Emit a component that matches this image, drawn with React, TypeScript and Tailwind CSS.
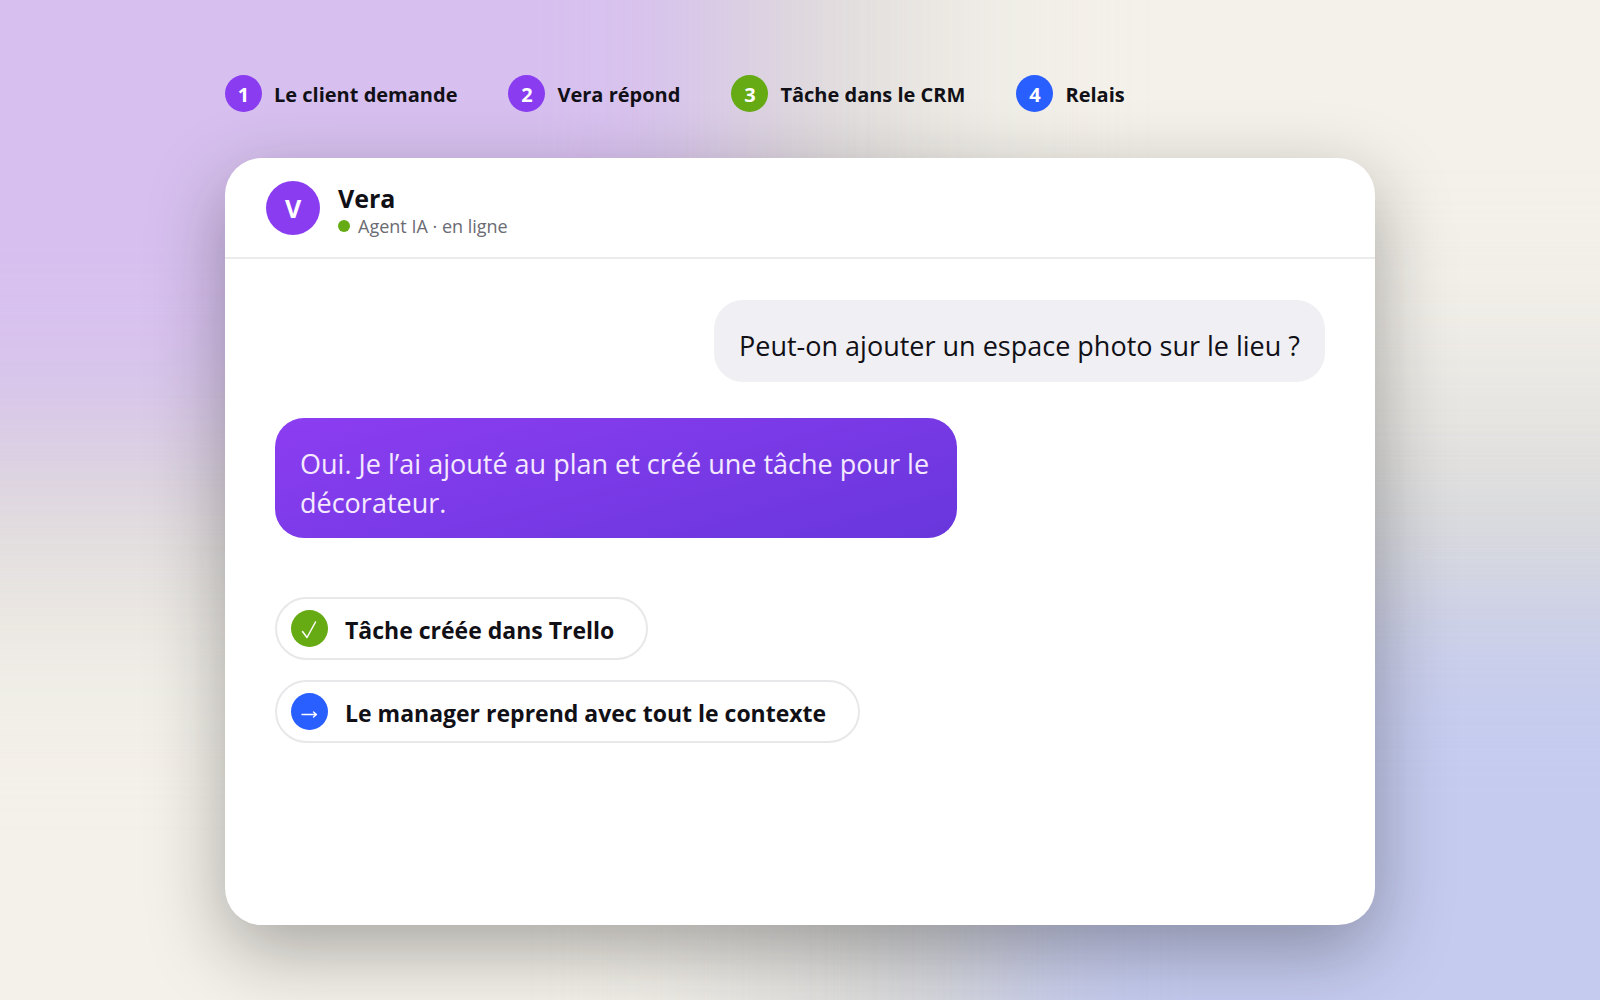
type Step = { n: string; label: string; color: string };

const steps: Step[] = [
  { n: "1", label: "Le client demande", color: "bg-[#8a3df0]" },
  { n: "2", label: "Vera répond", color: "bg-[#8a3df0]" },
  { n: "3", label: "Tâche dans le CRM", color: "bg-[#66aa14]" },
  { n: "4", label: "Relais", color: "bg-[#2a5fff]" },
];

const App = () => {
  return (
    <main className="relative isolate min-h-screen overflow-hidden bg-[#f4f1ea] px-8 py-[75px] flex flex-col items-center font-['Open_Sans','Noto_Sans',sans-serif] text-[#111016]">
      {/* Background glows, each one a coloured core over a wider grey halo */}
      <div className="absolute -z-10 -top-80 -left-80 w-[1230px] h-[910px] bg-[#dddad9] blur-[100px]" />
      <div className="absolute -z-10 -bottom-80 -right-80 w-[1150px] h-[910px] bg-[#dadada] blur-[100px]" />
      <div className="absolute -z-10 -top-80 -left-80 w-[1050px] h-[760px] bg-[#d7c0ef] blur-[80px]" />
      <div className="absolute -z-10 -bottom-80 -right-80 w-[920px] h-[720px] bg-[#c5cbef] blur-[80px]" />

      <div className="w-full max-w-[1150px] grow flex flex-col">
        <ol className="flex flex-wrap gap-x-[51px] gap-y-4 mb-[46px]">
          {steps.map((step) => (
            <li key={step.n} className="flex items-center gap-3">
              <span
                className={`w-[37px] h-[37px] rounded-full flex items-center justify-center pt-0.5 text-[20px] leading-none font-bold text-white ${step.color}`}
              >
                {step.n}
              </span>
              <span className="pt-0.5 text-[20px] leading-7 font-bold">{step.label}</span>
            </li>
          ))}
        </ol>

        {/* Chat window */}
        <section className="grow bg-white rounded-[37px] shadow-[0_25px_75px_rgba(20,20,20,0.34)]">
          <header className="flex items-center gap-[18px] px-[41px] h-[101px] border-b-2 border-[#ebebec]">
            <div className="w-[54px] h-[54px] rounded-full bg-[#8a3df0] flex items-center justify-center pt-0.5 text-[25px] leading-none font-bold text-white">
              V
            </div>
            <div className="pt-1">
              <h1 className="text-[25px] leading-8 font-bold">Vera</h1>
              <p className="flex items-center gap-2 text-[18px] leading-6 text-[#6b6b73]">
                <span className="w-3 h-3 rounded-full bg-[#66aa14]" />
                Agent IA · en ligne
              </p>
            </div>
          </header>

          <div className="flex flex-col items-start px-[50px] pt-[41px] pb-10">
            <p className="self-end rounded-[29px] bg-[#efeff4] px-[25px] pt-[26px] pb-[17px] text-[27px] leading-[39px]">
              Peut-on ajouter un espace photo sur le lieu ?
            </p>
            <p className="mt-9 max-w-[682px] rounded-[29px] bg-linear-165 from-[#8c3df1] to-[#6836dc] px-[25px] pt-[26px] pb-4 text-[27px] leading-[39px] text-[#f5e9ff]">
              Oui. Je l’ai ajouté au plan et créé une tâche pour le décorateur.
            </p>

            <div className="mt-[59px] flex flex-col items-start gap-5">
              <Chip icon="check" color="bg-[#66aa14]" label="Tâche créée dans Trello" />
              <Chip icon="arrow" color="bg-[#2a5fff]" label="Le manager reprend avec tout le contexte" />
            </div>
          </div>
        </section>
      </div>
    </main>
  );
};

// Chip Component
const Chip = ({
  icon,
  color,
  label,
}: {
  icon: "check" | "arrow";
  color: string;
  label: string;
}) => (
  <div className="flex items-center gap-[17px] h-[63px] rounded-full border-2 border-[#e8e8ea] pl-[14px] pr-8">
    <span className={`w-[37px] h-[37px] rounded-full flex items-center justify-center text-white ${color}`}>
      <svg
        className="w-[37px] h-[37px]"
        fill="none"
        stroke="currentColor"
        strokeLinecap="round"
        strokeLinejoin="round"
        viewBox="0 0 37 37"
      >
        {icon === "check" ? (
          <path strokeWidth={1.5} d="M11.5 21.5l4.5 6 8.5-15.5" />
        ) : (
          <path strokeWidth={1.3} d="M11 21.5h14.5M22.5 19l3 2.5-3 2.5" />
        )}
      </svg>
    </span>
    <span className="pt-0.5 text-[23px] leading-8 font-bold">{label}</span>
  </div>
);

export default App;
